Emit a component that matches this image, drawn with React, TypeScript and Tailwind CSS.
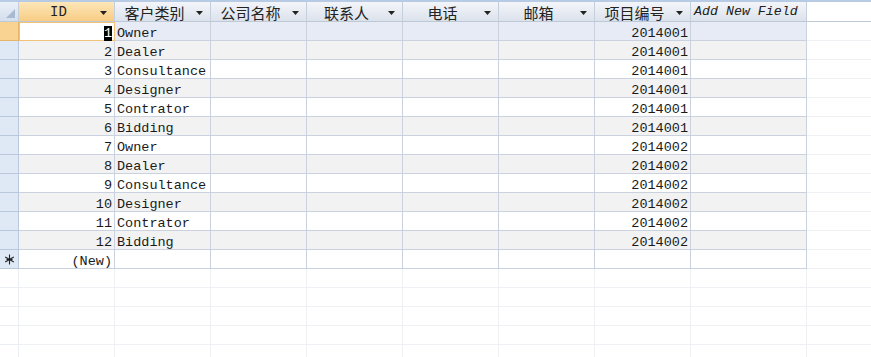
import React from "react";

const rows: [number, string, string][] = [
  [1, "Owner", "2014001"],
  [2, "Dealer", "2014001"],
  [3, "Consultance", "2014001"],
  [4, "Designer", "2014001"],
  [5, "Contrator", "2014001"],
  [6, "Bidding", "2014001"],
  [7, "Owner", "2014002"],
  [8, "Dealer", "2014002"],
  [9, "Consultance", "2014002"],
  [10, "Designer", "2014002"],
  [11, "Contrator", "2014002"],
  [12, "Bidding", "2014002"],
];

const mono = { fontFamily: '"Liberation Mono", "Courier New", monospace' };
const cjk = { fontFamily: '"Noto Sans CJK SC", "Noto Sans", sans-serif' };

function Arrow() {
  return (
    <svg width="7" height="4" viewBox="0 0 7 4" className="absolute right-[7px] top-[9px]">
      <path d="M0 0 H7 L3.5 4 Z" fill="#222" />
    </svg>
  );
}

function Star() {
  return (
    <svg width="11" height="11" viewBox="0 0 11 11">
      <g stroke="#222" strokeWidth="1.1" fill="none">
        <path d="M5.5 0.5 V10.5" />
        <path d="M1.2 3 L9.8 8" />
        <path d="M1.2 8 L9.8 3" />
        <path d="M2.5 5.5 H8.5" />
      </g>
    </svg>
  );
}

function Head({ label, w, active, italic }: { label: string; w: string; active?: boolean; italic?: boolean }) {
  return (
    <div
      className={`${w} relative h-full shrink-0 border-r border-[#c5cedb] ${
        active ? "bg-gradient-to-b from-[#fde6b8] to-[#f7cd84]" : "bg-gradient-to-b from-[#f3f5f9] to-[#dce2ec]"
      } flex items-center ${italic ? "justify-start pl-[3px]" : "justify-center pr-[16px]"}`}
    >
      {italic ? (
        <span className="italic text-[13.3px] text-[#222]" style={mono}>{label}</span>
      ) : (
        <span
          className="text-[15px] leading-none text-[#222] pt-[1px]"
          style={/[A-Za-z]/.test(label) ? { ...mono, fontSize: "14px" } : cjk}
        >
          {label}
        </span>
      )}
      {!italic && <Arrow />}
    </div>
  );
}

const cell = "shrink-0 border-r border-b border-[#c9d2de]";

export default function App() {
  return (
    <div className="w-[871px] h-[357px] overflow-hidden bg-white text-[#1a1a1a]" style={mono}>
      <div className="h-[2px] bg-[#b8cbe5]" />
      {/* header */}
      <div className="flex h-[20px] border-b border-[#bfc9d6]">
        <div className="w-[19px] shrink-0 border-r border-[#c5cedb] bg-gradient-to-b from-[#eaf0f8] to-[#d3deee] relative">
          <svg width="9" height="9" viewBox="0 0 9 9" className="absolute right-[3px] bottom-[3px]">
            <path d="M9 0 V9 H0 Z" fill="#a9b9cf" />
          </svg>
        </div>
        <Head label="ID" w="w-[96px]" active />
        <Head label="客户类别" w="w-[96px]" />
        <Head label="公司名称" w="w-[96px]" />
        <Head label="联系人" w="w-[96px]" />
        <Head label="电话" w="w-[96px]" />
        <Head label="邮箱" w="w-[96px]" />
        <Head label="项目编号" w="w-[96px]" />
        <Head label="Add New Field" w="w-[116px]" italic />
        <div className="flex-1 bg-white" />
      </div>
      {rows.map(([id, cat, code], i) => {
        const current = i === 0;
        const bg = current ? "bg-[#e6ebf5]" : i % 2 === 1 ? "bg-[#f2f2f2]" : "bg-white";
        return (
          <div key={id} className="flex h-[19px] text-[13.5px] leading-[15px]">
            <div
              className={`w-[19px] shrink-0 border-r border-b ${
                current ? "bg-[#f8d391] border-[#e3b66a]" : "bg-[#dfe8f5] border-[#b9c8dc]"
              }`}
            />
            <div
              className={`w-[96px] shrink-0 text-right pr-[2px] ${
                current ? "bg-white border border-[#f0c27a] pt-[3px]" : `${bg} ${cell} pt-[4px]`
              }`}
            >
              {current ? <span className="bg-black text-white">{id}</span> : id}
            </div>
            <div className={`w-[96px] pl-[2px] pt-[4px] ${bg} ${cell}`}>{cat}</div>
            {[0, 1, 2, 3].map((k) => (
              <div key={k} className={`w-[96px] ${bg} ${cell}`} />
            ))}
            <div className={`w-[96px] text-right pr-[2px] pt-[4px] ${bg} ${cell}`}>{code}</div>
            <div className={`w-[116px] ${bg} ${cell}`} />
            <div className="flex-1 border-b border-[#eef0f3]" />
          </div>
        );
      })}
      {/* new row */}
      <div className="flex h-[19px] text-[13.5px] leading-[15px]">
        <div className="w-[19px] shrink-0 bg-[#dfe8f5] border-r border-b border-[#b9c8dc] flex items-center justify-center">
          <Star />
        </div>
        <div className={`w-[96px] text-right pr-[2px] pt-[4px] ${cell}`}>(New)</div>
        {[0, 1, 2, 3, 4, 5].map((k) => (
          <div key={k} className={`w-[96px] ${cell}`} />
        ))}
        <div className={`w-[116px] ${cell}`} />
        <div className="flex-1 border-b border-[#eef0f3]" />
      </div>
      {/* empty area */}
      {[0, 1, 2, 3, 4].map((r) => (
        <div key={r} className="flex h-[19px]">
          <div className="w-[19px] shrink-0 border-r border-b border-[#eaedf2]" />
          {[0, 1, 2, 3, 4, 5, 6].map((k) => (
            <div key={k} className="w-[96px] shrink-0 border-r border-b border-[#eef0f3]" />
          ))}
          <div className="w-[116px] shrink-0 border-r border-b border-[#eef0f3]" />
          <div className="flex-1 border-b border-[#eef0f3]" />
        </div>
      ))}
    </div>
  );
}
